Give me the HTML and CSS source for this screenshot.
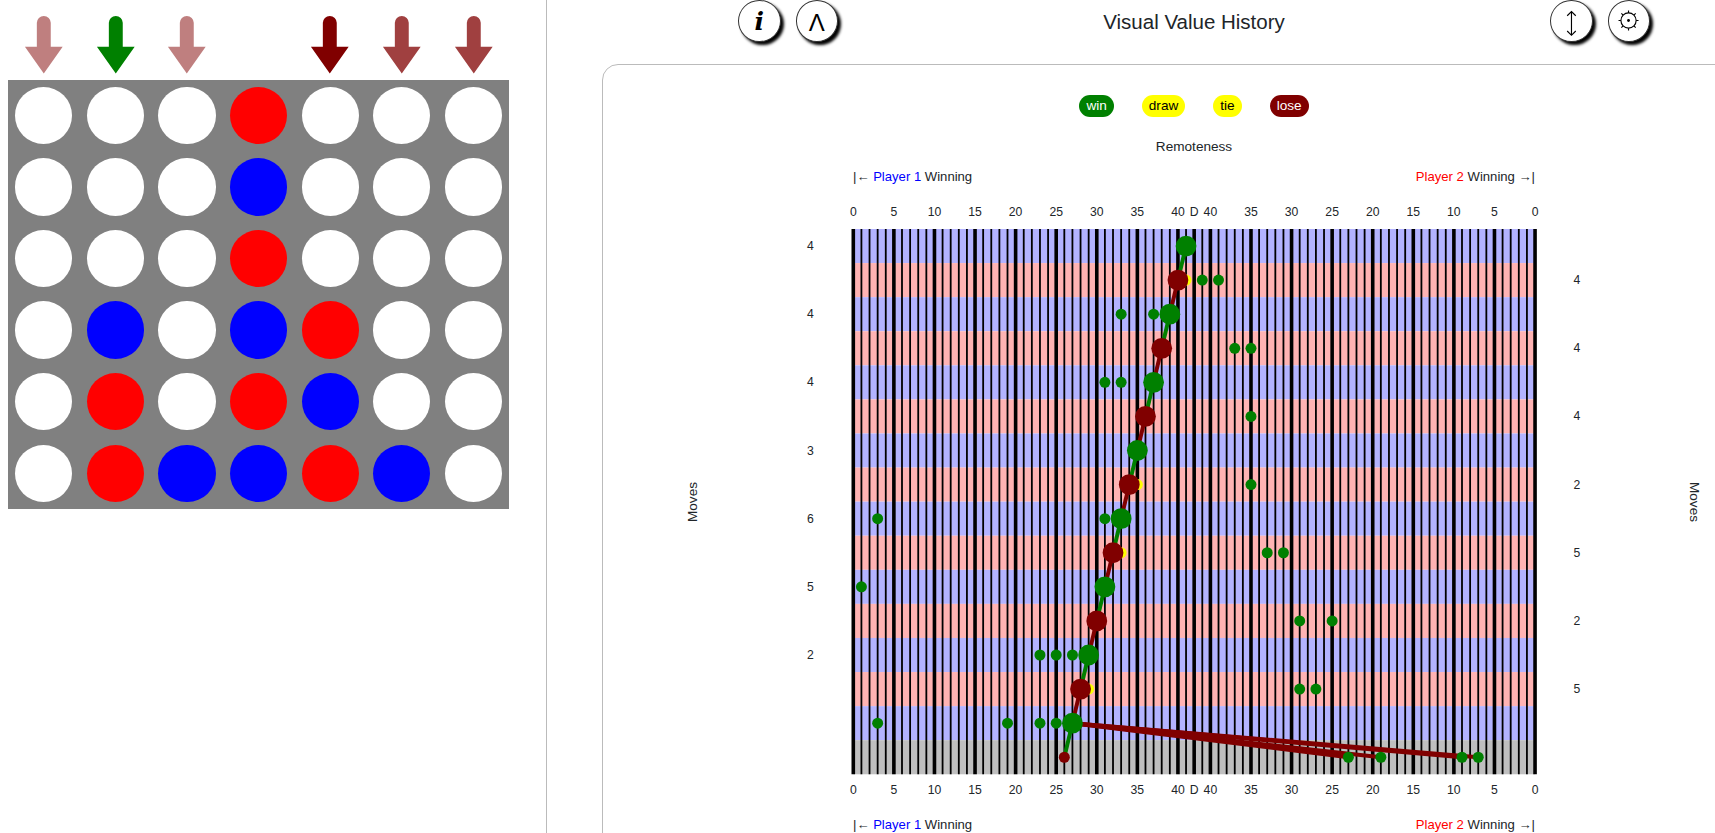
FILE: index.html
```html
<!doctype html>
<html>

	<head>
		<title>Visual Value History</title>
		<meta name="viewport" content="width=device-width, initial-scale=1.0">
		<link rel="stylesheet" href="styles.css">
	</head>

	<body>

		<div class="page">

			<!--	The game board and the move arrows.	-->
			<section class="gamePanel">

				<div class="arrowRow">
					<svg class="arrow arrowLoseFaint" viewBox="0 0 72 80"><path d="M29 47V23a7 7 0 0 1 14 0V47H55L36 74 17 47Z"/></svg>
					<svg class="arrow arrowWin" viewBox="0 0 72 80"><path d="M29 47V23a7 7 0 0 1 14 0V47H55L36 74 17 47Z"/></svg>
					<svg class="arrow arrowLoseFaint" viewBox="0 0 72 80"><path d="M29 47V23a7 7 0 0 1 14 0V47H55L36 74 17 47Z"/></svg>
					<span></span>
					<svg class="arrow arrowLose" viewBox="0 0 72 80"><path d="M29 47V23a7 7 0 0 1 14 0V47H55L36 74 17 47Z"/></svg>
					<svg class="arrow arrowLoseMid" viewBox="0 0 72 80"><path d="M29 47V23a7 7 0 0 1 14 0V47H55L36 74 17 47Z"/></svg>
					<svg class="arrow arrowLoseMid" viewBox="0 0 72 80"><path d="M29 47V23a7 7 0 0 1 14 0V47H55L36 74 17 47Z"/></svg>
				</div>

				<div class="board">
					<div class="slot"></div><div class="slot"></div><div class="slot"></div><div class="slot red"></div><div class="slot"></div><div class="slot"></div><div class="slot"></div>
					<div class="slot"></div><div class="slot"></div><div class="slot"></div><div class="slot blue"></div><div class="slot"></div><div class="slot"></div><div class="slot"></div>
					<div class="slot"></div><div class="slot"></div><div class="slot"></div><div class="slot red"></div><div class="slot"></div><div class="slot"></div><div class="slot"></div>
					<div class="slot"></div><div class="slot blue"></div><div class="slot"></div><div class="slot blue"></div><div class="slot red"></div><div class="slot"></div><div class="slot"></div>
					<div class="slot"></div><div class="slot red"></div><div class="slot"></div><div class="slot red"></div><div class="slot blue"></div><div class="slot"></div><div class="slot"></div>
					<div class="slot"></div><div class="slot red"></div><div class="slot blue"></div><div class="slot blue"></div><div class="slot red"></div><div class="slot blue"></div><div class="slot"></div>
				</div>

			</section>

			<!--	The history side.	-->
			<section class="historyPanel">

				<header class="historyHeader">

					<div class="btnGroup">
						<button class="roundBtn infoBtn">i</button>
						<button class="roundBtn collapseBtn">&Lambda;</button>
					</div>

					<h1 class="historyTitle">Visual Value History</h1>

					<div class="btnGroup">
						<button class="roundBtn">
							<svg class="btnIcon" viewBox="0 0 42 42">
								<path d="M21.5 11V36M17 15.5 21.5 11 26 15.5M17 31.500 21.5 36 26 31.500"/>
							</svg>
						</button>
						<button class="roundBtn">
							<svg class="btnIcon" viewBox="0 0 42 42">
								<circle cx="20.500" cy="20.500" r="8"/>
								<circle class="iconDot" cx="20.500" cy="20.500" r="1.500"/>
								<path d="M20.500 10V12.500M20.500 28.500V31M10 20.500H12.500M28.500 20.500H31M13 13 14.800 14.800M28 13 26.200 14.800M13 28 14.800 26.200M28 28 26.200 26.200"/>
							</svg>
						</button>
					</div>

				</header>

				<div class="chartCard">

					<div class="legend">
						<span class="legendItem legendWin">win</span>
						<span class="legendItem legendDraw">draw</span>
						<span class="legendItem legendDraw">tie</span>
						<span class="legendItem legendLose">lose</span>
					</div>

					<p class="axisTitle">Remoteness</p>

					<div class="winningRow">
						<span>|&larr; <span class="playerOne">Player 1</span> Winning</span>
						<span><span class="playerTwo">Player 2</span> Winning <span class="heavyArrow">&rarr;</span>|</span>
					</div>

					<!--	Filled in by chart.js.	-->
					<svg class="chart" id="chart" viewBox="0 0 1184 600"></svg>

					<div class="winningRow winningRowBottom">
						<span>|&larr; <span class="playerOne">Player 1</span> Winning</span>
						<span><span class="playerTwo">Player 2</span> Winning <span class="heavyArrow">&rarr;</span>|</span>
					</div>

				</div>

			</section>

		</div>

		<script src="chart.js"></script>

	</body>

</html>
```

FILE: styles.css
```css
html, body {
	margin: 0; padding: 0;
	height: 100%;
	overflow: hidden;
	font-family: "Liberation Sans", Arial, sans-serif;
	color: #212529;
	background-color: white;
}

.page {
	display: flex;
	height: 833px;
	overflow: hidden;
}

/*	The board	*/

.gamePanel {
	flex: 0 0 538px;
	padding-left: 8px;
	border-right: 1px solid #bbb;
}

.arrowRow {
	display: grid;
	grid-template-columns: repeat(7, 71.6px);
	height: 79.5px;
}

.arrow {
	display: block;
	width: 71.6px;
	height: 79.5px;
}

.arrowWin { fill: #008000; }
.arrowLose { fill: #800000; }
.arrowLoseMid { fill: #800000; fill-opacity: 0.75; }
.arrowLoseFaint { fill: #800000; fill-opacity: 0.5; }

.board {
	display: grid;
	grid-template-columns: repeat(7, 71.6px);
	grid-auto-rows: 71.6px;
	width: 501.2px;
	background-color: #808080;
}

.slot {
	width: 57.3px;
	height: 57.3px;
	margin: 7.15px;
	border-radius: 50%;
	background-color: white;
}

.red { background-color: #f00; }
.blue { background-color: #00f; }

/*	The history side	*/

.historyPanel {
	flex: 1 1 auto;
	min-width: 0;
}

.historyHeader {
	display: flex;
	justify-content: space-between;
	align-items: flex-start;
	height: 64px;
	padding: 0 65px 0 191px;
}

.btnGroup {
	display: flex;
	gap: 15px;
}

.roundBtn {
	width: 42.5px;
	height: 42px;
	padding: 0;
	border: 1px solid #333;
	border-radius: 50%;
	background-color: white;
	color: #000;
	box-shadow: 3px 3px 3px #000;
}

.infoBtn {
	font-family: "DejaVu Serif", serif;
	font-style: italic;
	font-weight: bold;
	font-size: 25px;
}

.collapseBtn {
	padding-top: 3px;
	font-family: "Liberation Sans", sans-serif;
	font-size: 24px;
}

.btnIcon {
	display: block;
	width: 40px;
	height: 40px;
	fill: none;
	stroke: #000;
	stroke-width: 1.2;
}

.iconDot {
	fill: #000;
	stroke: none;
}

.historyTitle {
	margin: 0;
	font-size: 20.5px;
	font-weight: normal;
	line-height: 44px;
}

.chartCard {
	box-sizing: border-box;
	width: 1184px;
	height: 900px;
	margin-left: 55px;
	padding-top: 30px;
	border: 1px solid #bbb;
	border-radius: 16px;
}

.legend {
	display: flex;
	justify-content: center;
	gap: 28px;
}

.legendItem {
	padding: 0 7px;
	border-radius: 11px;
	font-size: 13.6px;
	line-height: 22px;
}

.legendWin { background-color: #008000; color: white; }
.legendDraw { background-color: #ff0; color: black; }
.legendLose { background-color: #800000; color: white; }

.axisTitle {
	margin: 22px 0 0 0;
	font-size: 13.6px;
	line-height: 16px;
	text-align: center;
}

.winningRow {
	display: flex;
	justify-content: space-between;
	width: 682px;
	margin: 14px auto 0 auto;
	font-size: 13.1px;
	line-height: 16px;
}

.winningRowBottom {
	margin-top: 17px;
}

.heavyArrow {
	font-weight: bold;
}

.playerOne { color: #00f; }
.playerTwo { color: #f00; }

/*	The chart	*/

.chart {
	display: block;
	width: 1184px;
	height: 600px;
	margin-top: 15px;
}

.rowBlue { fill: #b3b3ff; }
.rowPink { fill: #ffb3b3; }
.rowGray { fill: #bfbfbf; }

.gridLine { stroke: #000; stroke-width: 1.8; }
.gridLineBold { stroke: #000; stroke-width: 3.6; }

.edgeWin { stroke: #008000; stroke-width: 4; }
.edgeLose { stroke: #800000; stroke-width: 4; }

.dotWin { fill: #008000; }
.dotLose { fill: #800000; }
.dotDraw { fill: #ff0; }

.tickText {
	font-size: 12.2px;
	fill: #212529;
	text-anchor: middle;
}

.movesText {
	font-size: 13.6px;
	fill: #212529;
	text-anchor: middle;
}
```

FILE: chart.js
```js
//	Draws the value history chart into the svg.

const svgNS = "http://www.w3.org/2000/svg";
const chart = document.getElementById("chart");

//	Size of a remoteness step and a row, and where the grid starts.
const stepWidth = 8.116;
const rowHeight = 34.08;
const gridLeft = 250.3;
const gridTop = 29;
const gridRows = 16;
const gridSteps = 84;

//	The move that was played in each row.
const playedMoves = [41, 40, 39, 38, 37, 36, 35, 34, 33, 32, 31, 30, 29, 28, 27, 26];

//	The other moves for each row.
const otherMoves = [
	[],
	[{x: 41, c: "dotDraw"}, {x: 43}, {x: 45}],
	[{x: 33}, {x: 37}],
	[{x: 47}, {x: 49}],
	[{x: 31}, {x: 33}],
	[{x: 49}],
	[],
	[{x: 35, c: "dotDraw"}, {x: 49}],
	[{x: 3}, {x: 31}],
	[{x: 33, c: "dotDraw"}, {x: 51}, {x: 53}],
	[{x: 1}],
	[{x: 55}, {x: 59}],
	[{x: 23}, {x: 25}, {x: 27}],
	[{x: 29, c: "dotDraw"}, {x: 55}, {x: 57}],
	[{x: 3}, {x: 19}, {x: 23}, {x: 25}],
	[{x: 61}, {x: 65}, {x: 75}, {x: 77}]
];

//	The number of moves written beside the rows.
const leftMoves = {0: 4, 2: 4, 4: 4, 6: 3, 8: 6, 10: 5, 12: 2};
const rightMoves = {1: 4, 3: 4, 5: 4, 7: 2, 9: 5, 11: 2, 13: 5};

function stepX(step){
	return gridLeft + step * stepWidth;
}

function rowY(row){
	return gridTop + rowHeight * (row + 0.5);
}

//	Makes one svg element and adds it to the chart.
function add(tag, attrs, text){

	const el = document.createElementNS(svgNS, tag);

	for(const name in attrs){
		el.setAttribute(name, attrs[name]);
	}

	if(text !== undefined){
		el.textContent = text;
	}

	chart.appendChild(el);
	return el;

}

function drawRows(){

	for(let i = 0; i < gridRows; i++){

		let rowClass = i % 2 == 0 ? "rowBlue" : "rowPink";

		if(i == gridRows - 1){
			rowClass = "rowGray";
		}

		add("rect", {
			"class": rowClass,
			x: gridLeft,
			y: gridTop + i * rowHeight,
			width: gridSteps * stepWidth,
			height: rowHeight
		});

	}

}

function drawGridLines(){

	const bottom = gridTop + gridRows * rowHeight;

	for(let i = 0; i <= gridSteps; i++){

		//	Bold every 5 from each side, and at the draw line.
		const isBold = (i <= 40 && i % 5 == 0) || (i >= 44 && (gridSteps - i) % 5 == 0) || i == 42;

		add("line", {
			"class": isBold ? "gridLineBold" : "gridLine",
			x1: stepX(i), y1: gridTop,
			x2: stepX(i), y2: bottom
		});

	}

}

function drawTicks(y){

	for(let i = 0; i <= 40; i += 5){
		add("text", {"class": "tickText", x: stepX(i), y: y}, i);
		add("text", {"class": "tickText", x: stepX(gridSteps - i), y: y}, i);
	}

	add("text", {"class": "tickText", x: stepX(42), y: y}, "D");

}

function drawMoveLabels(){

	for(const row in leftMoves){
		add("text", {"class": "tickText", x: 207.5, y: rowY(Number(row)) + 4}, leftMoves[row]);
	}

	for(const row in rightMoves){
		add("text", {"class": "tickText", x: 974, y: rowY(Number(row)) + 4}, rightMoves[row]);
	}

	add("text", {"class": "movesText", transform: "translate(94 302) rotate(-90)"}, "Moves");
	add("text", {"class": "movesText", transform: "translate(1087 302) rotate(90)"}, "Moves");

}

function drawEdges(){

	for(let i = 0; i < playedMoves.length - 1; i++){
		add("line", {
			"class": i % 2 == 0 ? "edgeWin" : "edgeLose",
			x1: stepX(playedMoves[i]), y1: rowY(i),
			x2: stepX(playedMoves[i + 1]), y2: rowY(i + 1)
		});
	}

	//	The moves out of the second to last row that lose right away.
	for(const move of otherMoves[gridRows - 1]){
		add("line", {
			"class": "edgeLose",
			x1: stepX(playedMoves[gridRows - 2]), y1: rowY(gridRows - 2),
			x2: stepX(move.x), y2: rowY(gridRows - 1)
		});
	}

}

function drawDots(){

	for(let i = 0; i < gridRows; i++){

		for(const move of otherMoves[i]){
			add("circle", {"class": move.c || "dotWin", cx: stepX(move.x), cy: rowY(i), r: 5.5});
		}

		const isLast = i == gridRows - 1;

		add("circle", {
			"class": i % 2 == 0 && !isLast ? "dotWin" : "dotLose",
			cx: stepX(playedMoves[i]),
			cy: rowY(i),
			r: isLast ? 5.5 : 10.4
		});

	}

}

drawRows();
drawGridLines();
drawTicks(16);
drawTicks(594);
drawMoveLabels();
drawEdges();
drawDots();
```
